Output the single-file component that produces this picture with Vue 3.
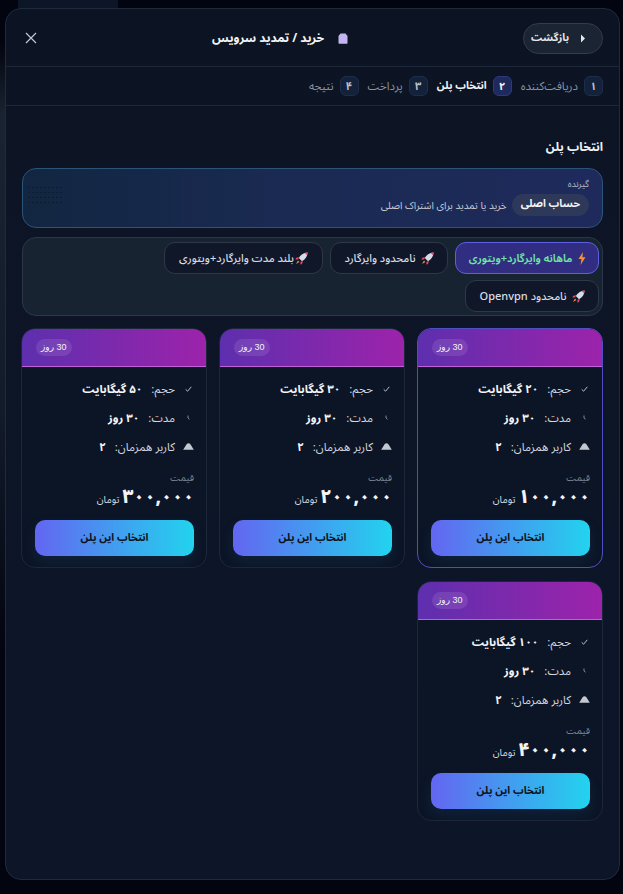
<script setup>
const steps = [
  { n: '۱', label: 'دریافت‌کننده' },
  { n: '۲', label: 'انتخاب پلن', active: true },
  { n: '۳', label: 'پرداخت' },
  { n: '۴', label: 'نتیجه' },
]
const plans = [
  { gb: '۲۰', price: '۱۰۰,۰۰۰', selected: true },
  { gb: '۳۰', price: '۲۰۰,۰۰۰' },
  { gb: '۵۰', price: '۳۰۰,۰۰۰' },
  { gb: '۱۰۰', price: '۴۰۰,۰۰۰' },
]
const tabs = [
  { label: 'ماهانه وایرگارد+ویتوری', icon: 'bolt', active: true },
  { label: 'نامحدود وایرگارد', icon: 'rocket' },
  { label: 'بلند مدت وایرگارد+ویتوری', icon: 'rocket', tight: true },
  { label: 'نامحدود Openvpn', icon: 'rocket' },
]
</script>

<template>
  <div class="page">
    <div class="backdrop"></div>
    <div class="backdrop-top"></div>
    <section class="modal" dir="rtl">
      <header class="head">
        <button class="back">
          <svg width="6" height="9" viewBox="0 0 6 9"><path d="M1 0.5 L5 4.5 L1 8.5 Z" fill="#e5e7eb" /></svg>
          <span>بازگشت</span>
        </button>
        <h1 class="title">
          <svg width="10" height="11" viewBox="0 0 10 11"><path d="M2.5 0.5 H7.5 L9.5 3 V10 Q9.5 10.7 8.8 10.7 H1.2 Q0.5 10.7 0.5 10 V3 Z" fill="#c4b5f2" /></svg>
          <span>خرید / تمدید سرویس</span>
        </h1>
        <button class="close" aria-label="close">
          <svg width="12" height="12" viewBox="0 0 12 12"><path d="M1 1 L11 11 M11 1 L1 11" stroke="#c3c8d2" stroke-width="1.2" fill="none" /></svg>
        </button>
      </header>

      <nav class="steps">
        <div v-for="s in steps" :key="s.n" class="step" :class="{ on: s.active }">
          <span class="num">{{ s.n }}</span>
          <span class="lbl">{{ s.label }}</span>
        </div>
      </nav>

      <main class="body">
        <h2 class="sub">انتخاب پلن</h2>

        <div class="recipient">
          <span class="dots"></span>
          <div class="rec-label">گیرنده</div>
          <div class="rec-row">
            <span class="rec-pill">حساب اصلی</span>
            <span class="rec-note">خرید یا تمدید برای اشتراک اصلی</span>
          </div>
        </div>

        <div class="tabs">
          <button v-for="t in tabs" :key="t.label" class="tab" :class="{ on: t.active, tight: t.tight }">
            <svg v-if="t.icon === 'bolt'" width="8" height="13" viewBox="0 0 8 13"><path d="M5 0 L0.5 7 H3.5 L2.5 13 L7.5 5.2 H4.4 Z" fill="#f59332" /></svg>
            <svg v-else width="13" height="13" viewBox="0 0 13 13">
              <path d="M12.6 0.4 C9 0.6 6 2.2 3.8 6 L7 9.2 C10.8 7 12.4 4 12.6 0.4 Z" fill="#d9dce6" />
              <path d="M12.6 0.4 C11.6 0.5 10.6 0.7 9.7 1 L12 3.3 C12.3 2.4 12.5 1.4 12.6 0.4 Z" fill="#e8436b" />
              <path d="M4.3 5.2 L1.2 5.8 L0.3 7.6 L3 7.6 Z M7.8 8.7 L7.2 11.8 L5.4 12.7 L5.4 10 Z" fill="#e8436b" />
              <path d="M3 8.6 L4.4 10 L1 12 Z" fill="#f59332" />
            </svg>
            <span>{{ t.label }}</span>
          </button>
        </div>

        <div class="grid">
          <article v-for="p in plans" :key="p.gb" class="card" :class="{ sel: p.selected }">
            <div class="card-head"><span class="days"><span dir="ltr">30</span> روز</span></div>
            <div class="card-body">
              <ul class="specs">
                <li>
                  <span class="ico"><svg width="7" height="6" viewBox="0 0 7 6"><path d="M0.7 3.4 L2.6 5.2 L6.3 0.8" stroke="#b9bec9" stroke-width="1" fill="none" /></svg></span>
                  <span class="k">حجم:</span><b>{{ p.gb }} گیگابایت</b>
                </li>
                <li>
                  <span class="ico"><svg width="3" height="5" viewBox="0 0 3 5"><path d="M1 0.5 V3 L2.5 4.2" stroke="#9ea4b0" stroke-width="0.8" fill="none" /></svg></span>
                  <span class="k">مدت:</span><b>۳۰ روز</b>
                </li>
                <li>
                  <span class="ico"><svg width="11" height="7" viewBox="0 0 11 7"><path d="M5.5 0.3 C7 0.3 7.6 1.6 8.2 2.6 L10.8 6.7 H0.2 L2.8 2.6 C3.4 1.6 4 0.3 5.5 0.3 Z" fill="#c3c7d0" /></svg></span>
                  <span class="k">کاربر همزمان:</span><b>۲</b>
                </li>
              </ul>
              <div class="price-label">قیمت</div>
              <div class="price"><strong>{{ p.price }}</strong><span>تومان</span></div>
              <button class="choose">انتخاب این پلن</button>
            </div>
          </article>
        </div>
      </main>
    </section>
  </div>
</template>

<style>
html, body { margin: 0; background: #02040f; }
</style>

<style scoped>
* { box-sizing: border-box; }
.page {
  position: relative;
  width: 623px;
  height: 894px;
  padding: 8px 3px 14px 5px;
  overflow: hidden;
  background: #02040f;
  font-family: "Noto Sans Arabic", "Vazirmatn", "DejaVu Sans", "Noto Sans", sans-serif;
  color: #e5e7eb;
}
.backdrop {
  position: absolute;
  left: 0;
  top: 40px;
  width: 6px;
  height: 620px;
  background: linear-gradient(180deg, transparent 0%, #1a2331 12%, #121b2a 60%, transparent 100%);
}
.backdrop-top {
  position: absolute;
  left: 18px;
  top: 0;
  width: 100px;
  height: 9px;
  background: #0c1626;
}
.modal {
  position: relative;
  height: 872px;
  border: 1px solid #1f2a3d;
  border-radius: 16px;
  background: linear-gradient(180deg, #0c1424 0%, #0d1629 100%);
  overflow: hidden;
}
button { font-family: inherit; cursor: pointer; }
.head {
  display: flex;
  align-items: center;
  justify-content: space-between;
  height: 58px;
  padding: 1px 16px 0 19px;
  border-bottom: 1px solid #1c2739;
}
.back {
  display: flex;
  align-items: center;
  gap: 11px;
  width: 80px;
  height: 31px;
  padding: 0 16px 0 4px;
  border: 1px solid #323c4b;
  border-radius: 16px;
  background: #1a2432;
  color: #e5e7eb;
  font-size: 10.5px;
  font-weight: 700;
}
.back svg { flex-shrink: 0; }
.title {
  display: flex;
  align-items: center;
  gap: 14px;
  margin: 0;
  font-size: 12px;
  font-weight: 700;
  color: #f3f4f6;
}
.close {
  display: flex;
  padding: 0;
  border: 0;
  background: none;
}
.steps {
  display: flex;
  align-items: center;
  gap: 9px;
  height: 39px;
  padding: 0 16px;
  border-bottom: 1px solid #1c2739;
}
.step {
  display: flex;
  align-items: center;
  gap: 6px;
  color: #8d93a0;
  font-size: 11.5px;
}
.step.on { color: #f3f4f6; font-weight: 700; font-size: 10.5px; }
.num {
  display: flex;
  align-items: center;
  justify-content: center;
  width: 19px;
  height: 20px;
  border: 1px solid #1d2d4b;
  border-radius: 6px;
  background: #13213a;
  color: #b9bec9;
  font-size: 11px;
  font-weight: 700;
}
.step.on .num {
  border-color: #2c3a80;
  background: #1e2a5e;
  color: #f3f4f6;
  font-size: 11px;
}
.body { padding: 30px 16px 0; }
.sub {
  margin: 0 0 10px;
  height: 22px;
  line-height: 24px;
  font-size: 12px;
  font-weight: 700;
  color: #f0f1f4;
}
.recipient {
  position: relative;
  height: 60px;
  padding: 9px 13px 8px;
  border: 1px solid #2a5578;
  border-radius: 14px;
  background: linear-gradient(270deg, #1f2a5c 0%, #1a2a52 55%, #122641 100%);
}
.dots {
  position: absolute;
  left: 4px;
  top: 16px;
  width: 36px;
  height: 20px;
  background-image: radial-gradient(circle, #070c18 0.6px, transparent 0.9px);
  background-size: 4px 5px;
  opacity: 0.4;
}
.rec-label { font-size: 9px; line-height: 14px; color: #b7bcc8; }
.rec-row { display: flex; align-items: center; gap: 5px; margin-top: 2px; }
.rec-pill {
  padding: 0 9px;
  height: 22px;
  line-height: 21px;
  border-radius: 11px;
  background: #2e3858;
  color: #f3f4f6;
  font-size: 10.5px;
  font-weight: 700;
}
.rec-note { font-size: 10px; color: #c9ccd5; }
.tabs {
  display: flex;
  flex-wrap: wrap;
  gap: 6px 7px;
  height: 79px;
  margin-top: 9px;
  padding: 4px 3px 4px 30px;
  border: 1px solid #2b3646;
  border-radius: 14px;
  background: #182332;
}
.tab {
  display: flex;
  align-items: center;
  gap: 5px;
  height: 32px;
  padding: 0 13.5px;
  border: 1px solid #2e3848;
  border-radius: 11px;
  background: #0f1729;
  color: #d9dce3;
  font-size: 11px;
  font-weight: 500;
}
.tab.tight { gap: 1px; padding: 0 14px; }
.tab.on {
  padding: 0 12.5px;
  border-color: #5b60e0;
  background: #312e81;
  color: #6ee7a5;
  font-weight: 600;
}
.grid {
  display: grid;
  grid-template-columns: repeat(3, 186px);
  gap: 13px 12px;
  margin-top: 12px;
}
.card {
  height: 240px;
  border: 1px solid #1c2739;
  border-radius: 14px;
  background: #0c1526;
  overflow: hidden;
}
.card.sel { border-color: #4f4fc4; }
.card-head {
  display: flex;
  align-items: center;
  height: 38px;
  padding: 0 14px;
  border-bottom: 1px solid #c05fd6;
  background: linear-gradient(270deg, #9d23ab 0%, #5d2fae 100%);
}
.days {
  margin-right: auto;
  margin-top: -1px;
  padding: 0 5px;
  height: 17px;
  line-height: 17px;
  border-radius: 9px;
  background: rgba(255, 255, 255, 0.1);
  color: #f3f4f6;
  font-family: "Liberation Sans", "DejaVu Sans", sans-serif;
  font-size: 9px;
}
.card-body { padding: 7px 12px 0 14px; }
.specs { margin: 0; padding: 0; list-style: none; }
.specs li {
  display: flex;
  align-items: center;
  height: 29px;
  font-size: 11.5px;
  color: #d4d7de;
}
.ico {
  display: flex;
  justify-content: center;
  width: 11px;
  margin-left: 8px;
}
.k { margin-left: 9px; }
.specs b { font-weight: 700; color: #f3f4f6; }
.price-label {
  margin-top: 10px;
  font-size: 9.5px;
  line-height: 14px;
  color: #7f8592;
}
.price {
  display: flex;
  align-items: baseline;
  gap: 3px;
  height: 25px;
}
.price strong {
  font-size: 19px;
  line-height: 24px;
  letter-spacing: -0.5px;
  font-weight: 800;
  color: #f3f4f6;
}
.price span { font-size: 10px; color: #d9dce3; }
.choose {
  display: block;
  width: 159px;
  height: 36px;
  margin-top: 10px;
  border: 0;
  border-radius: 10px;
  background: linear-gradient(270deg, #22d3ee 0%, #6366f1 100%);
  box-shadow: 0 6px 14px rgba(34, 120, 200, 0.12);
  color: #0b1220;
  font-size: 10.5px;
  font-weight: 700;
}
</style>
